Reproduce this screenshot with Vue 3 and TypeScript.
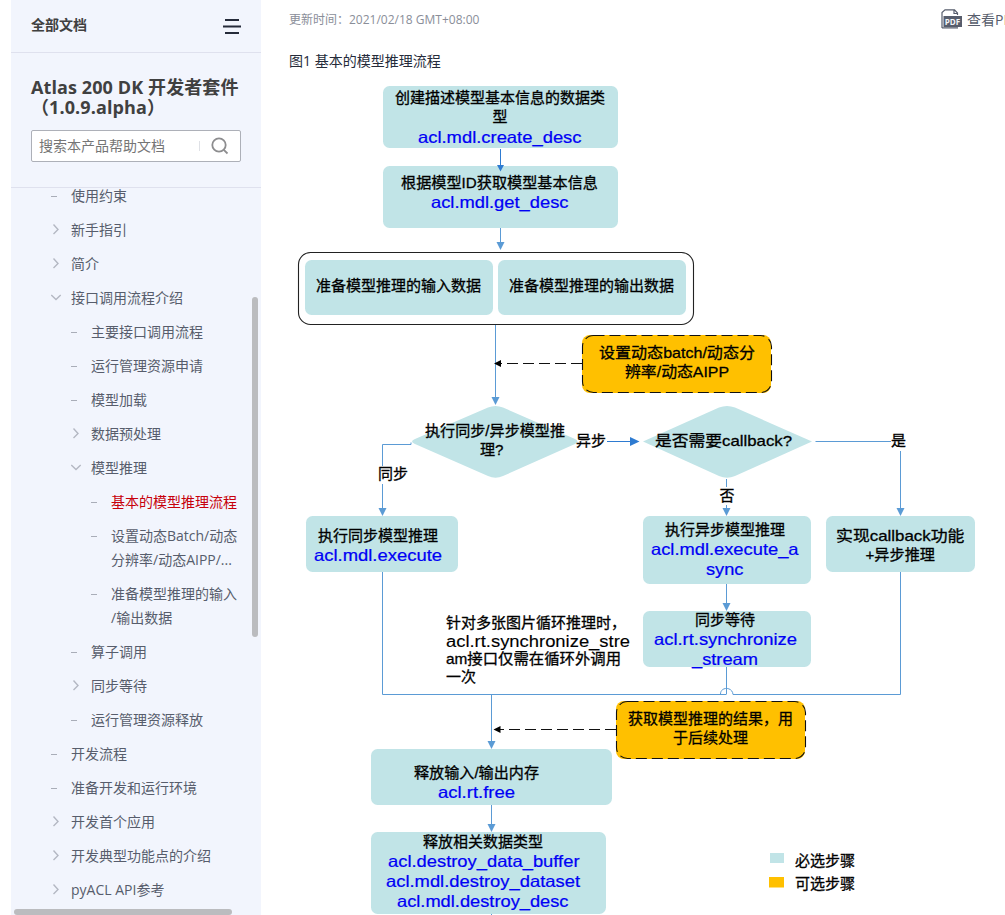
<script setup lang="ts">
type Kind = 'leaf' | 'closed' | 'open'
interface NavItem { lines: string[]; level: number; kind: Kind; active?: boolean }
interface Box { x: number; y: number; w: number; h: number }
interface Label { t: string; x: number; y: number; w: number; api?: boolean; plain?: boolean }

const nav: NavItem[] = [
  { lines: ['使用约束'], level: 0, kind: 'leaf' },
  { lines: ['新手指引'], level: 0, kind: 'closed' },
  { lines: ['简介'], level: 0, kind: 'closed' },
  { lines: ['接口调用流程介绍'], level: 0, kind: 'open' },
  { lines: ['主要接口调用流程'], level: 1, kind: 'leaf' },
  { lines: ['运行管理资源申请'], level: 1, kind: 'leaf' },
  { lines: ['模型加载'], level: 1, kind: 'leaf' },
  { lines: ['数据预处理'], level: 1, kind: 'closed' },
  { lines: ['模型推理'], level: 1, kind: 'open' },
  { lines: ['基本的模型推理流程'], level: 2, kind: 'leaf', active: true },
  { lines: ['设置动态Batch/动态', '分辨率/动态AIPP/...'], level: 2, kind: 'leaf' },
  { lines: ['准备模型推理的输入', '/输出数据'], level: 2, kind: 'leaf' },
  { lines: ['算子调用'], level: 1, kind: 'leaf' },
  { lines: ['同步等待'], level: 1, kind: 'closed' },
  { lines: ['运行管理资源释放'], level: 1, kind: 'leaf' },
  { lines: ['开发流程'], level: 0, kind: 'leaf' },
  { lines: ['准备开发和运行环境'], level: 0, kind: 'leaf' },
  { lines: ['开发首个应用'], level: 0, kind: 'closed' },
  { lines: ['开发典型功能点的介绍'], level: 0, kind: 'closed' },
  { lines: ['pyACL API参考'], level: 0, kind: 'closed' },
]

const required: Box[] = [
  { x: 383, y: 86, w: 235, h: 62 },
  { x: 383, y: 166, w: 235, h: 62 },
  { x: 305, y: 260, w: 188, h: 55 },
  { x: 498, y: 260, w: 188, h: 55 },
  { x: 306, y: 516, w: 152, h: 56 },
  { x: 643, y: 516, w: 168, h: 68 },
  { x: 826, y: 516, w: 149, h: 56 },
  { x: 643, y: 611, w: 168, h: 56 },
  { x: 371, y: 749, w: 241, h: 56 },
  { x: 371, y: 832, w: 235, h: 82 },
]
const optional: Box[] = [
  { x: 582, y: 335, w: 190, h: 58 },
  { x: 616, y: 701, w: 190, h: 58 },
]

const labels: Label[] = [
  { t: '创建描述模型基本信息的数据类', x: 395, y: 103, w: 210 },
  { t: '型', x: 492.5, y: 121.6, w: 15 },
  { t: 'acl.mdl.create_desc', x: 418, y: 142.7, w: 163.5, api: true },
  { t: '根据模型ID获取模型基本信息', x: 401, y: 188, w: 197 },
  { t: 'acl.mdl.get_desc', x: 431, y: 207.7, w: 137.5, api: true },
  { t: '准备模型推理的输入数据', x: 316, y: 291, w: 165 },
  { t: '准备模型推理的输出数据', x: 509, y: 291, w: 165 },
  { t: '设置动态batch/动态分', x: 599, y: 358, w: 156 },
  { t: '辨率/动态AIPP', x: 625, y: 377, w: 104 },
  { t: '执行同步/异步模型推', x: 425, y: 436, w: 140 },
  { t: '理?', x: 480, y: 455, w: 23.5 },
  { t: '异步', x: 576, y: 446, w: 30 },
  { t: '是否需要callback?', x: 655, y: 446, w: 137 },
  { t: '同步', x: 378, y: 479, w: 30 },
  { t: '否', x: 719.5, y: 501, w: 15 },
  { t: '是', x: 891, y: 446, w: 15 },
  { t: '执行异步模型推理', x: 665, y: 535, w: 120 },
  { t: 'acl.mdl.execute_a', x: 651, y: 554.7, w: 147.5, api: true },
  { t: 'sync', x: 706, y: 575, w: 37.5, api: true },
  { t: '实现callback功能', x: 836, y: 541, w: 128.5 },
  { t: '+异步推理', x: 865.5, y: 560, w: 69.5 },
  { t: '执行同步模型推理', x: 318, y: 541, w: 120 },
  { t: 'acl.mdl.execute', x: 314, y: 560.7, w: 128, api: true },
  { t: '针对多张图片循环推理时，', x: 446, y: 628, w: 180 },
  { t: 'acl.rt.synchronize_stre', x: 446, y: 646.7, w: 184, plain: true },
  { t: 'am接口仅需在循环外调用', x: 446, y: 664, w: 175 },
  { t: '一次', x: 446, y: 682, w: 30 },
  { t: '同步等待', x: 695, y: 625, w: 60 },
  { t: 'acl.rt.synchronize', x: 654, y: 645, w: 143, api: true },
  { t: '_stream', x: 692, y: 664.5, w: 66, api: true },
  { t: '获取模型推理的结果，用', x: 628, y: 724, w: 165 },
  { t: '于后续处理', x: 673, y: 743, w: 75 },
  { t: '释放输入/输出内存', x: 414, y: 778, w: 125 },
  { t: 'acl.rt.free', x: 438, y: 797.5, w: 77, api: true },
  { t: '释放相关数据类型', x: 423, y: 847, w: 120 },
  { t: 'acl.destroy_data_buffer', x: 388, y: 866.7, w: 191.5, api: true },
  { t: 'acl.mdl.destroy_dataset', x: 386, y: 887, w: 194, api: true },
  { t: 'acl.mdl.destroy_desc', x: 397, y: 907, w: 171.5, api: true },
  { t: '必选步骤', x: 795, y: 866, w: 60 },
  { t: '可选步骤', x: 795, y: 889, w: 60 },
]

const lines: string[] = [
  'M500.5 228V243', 'M495.5 325V398', 'M411 442.5V444.5H382.5V466M382.5 484V509',
  'M726.5 479V487M726.5 505V509', 'M815.5 441.5H891M900.5 451V509',
  'M726.5 584V604', 'M726.5 667V694', 'M382.5 572V694.5H726.5M733 694.5H900.5V572',
  'M720.5 694C720.5 686.5 732.5 686.5 733 694.5', 'M491.5 695V742', 'M491.5 805V825', 'M491.5 914V915',
]
const heads: [number, number][] = [
  [500.5, 250], [495.5, 405], [382.5, 516], [726.5, 516], [900.5, 516], [726.5, 611], [491.5, 749], [491.5, 832],
]
const head = ([x, y]: [number, number]): string => `M${x - 4} ${y - 8}H${x + 4}L${x} ${y}Z`
const kindOf = (l: Label): string => (l.api ? 'api' : l.plain ? 'plain' : 'step')
</script>

<template>
  <div class="page">
    <aside class="sidebar">
      <header class="all-docs">
        <span>全部文档</span>
        <svg width="18" height="15" viewBox="0 0 18 15"><path d="M2 1H16M0 7.5H18M2 14H16" stroke="#252b3a" stroke-width="2" /></svg>
      </header>
      <section class="product">
        <h1><span>Atlas 200 DK 开发者套件</span><span>（1.0.9.alpha）</span></h1>
        <div class="search">
          <span>搜索本产品帮助文档</span>
          <i></i>
          <svg width="18" height="18" viewBox="0 0 18 18" fill="none" stroke="#8d8d8f" stroke-width="1.8"><circle cx="8" cy="8" r="6.7" /><path d="M12.8 12.8L16.5 16.5" /></svg>
        </div>
      </section>
      <nav class="tree">
        <ul>
          <li v-for="(n, i) in nav" :key="i" :class="['lv' + n.level, { active: n.active }]">
            <svg class="mark" width="12" height="24" viewBox="0 0 12 24" fill="none">
              <path v-if="n.kind === 'leaf'" d="M0 12.5H6" stroke="#a9adb8" />
              <path v-else-if="n.kind === 'closed'" d="M2.5 6.5L7 11.5L2.5 16" stroke="#b4b8c3" stroke-width="1.4" />
              <path v-else d="M0.3 9L5 13.5L9.7 9" stroke="#b4b8c3" stroke-width="1.4" />
            </svg>
            <span class="name"><span v-for="l in n.lines" :key="l">{{ l }}</span></span>
          </li>
        </ul>
        <div class="bar-v"></div>
        <div class="bar-h"></div>
      </nav>
    </aside>

    <main class="content">
      <div class="meta">
        <span class="time">更新时间：2021/02/18 GMT+08:00</span>
        <span class="pdf">
          <svg width="22" height="20" viewBox="0 0 22 20">
            <path d="M1 19V3.5L4 0.8H13.5L16.5 4V6M13 1V4.5H16.5M1 18.8H17" fill="none" stroke="#575d6c" stroke-width="1.2" />
            <rect x="2.5" y="7" width="18.5" height="11" fill="#575d6c" />
            <text x="3.8" y="16" font-size="9" font-weight="700" textLength="15.5" lengthAdjust="spacingAndGlyphs" fill="#f4f5f8">PDF</text>
          </svg>
          <span>查看PDF</span>
        </span>
      </div>
      <p class="caption">图1 基本的模型推理流程</p>
      <svg class="flow" width="744" height="841" viewBox="261 74 744 841">
        <rect v-for="(b, i) in required" :key="'r' + i" :x="b.x" :y="b.y" :width="b.w" :height="b.h" rx="6.5" fill="#c1e4e7" />
        <rect x="298.5" y="252.5" width="395" height="72" rx="12" fill="none" stroke="#222" stroke-width="1.1" />
        <path d="M415 439L488 407.5Q495.5 404.5 503 407.5L575 439Q580 441.5 575 444L503 476Q495.5 479.5 488 476L415 444Q409 441.5 415 439Z" fill="#c1e4e7" />
        <path d="M643 441.5L719 407.5Q727 404.5 735 407.5L812 441.5L735 476Q727 479.5 719 476Z" fill="#c1e4e7" />
        <g v-for="(b, i) in optional" :key="'o' + i">
          <rect :x="b.x" :y="b.y" :width="b.w - 1" :height="b.h" rx="8" fill="#ffc000" />
          <rect :x="b.x + 0.5" :y="b.y + 0.5" :width="b.w - 1" :height="b.h - 1" rx="11" fill="none" stroke="#111" stroke-width="1.1" stroke-dasharray="11 5" />
        </g>
        <path v-for="l in lines" :key="l" :d="l" fill="none" stroke="#5b9bd5" />
        <path v-for="(h, i) in heads" :key="'h' + i" :d="head(h)" fill="#5b9bd5" />
        <path d="M500.5 149V165M607 441.5H631" stroke="#2e7bd1" />
        <path d="M497 165H504L500.5 171.5ZM630 437V446L639.5 441.5Z" fill="#2e7bd1" />
        <path d="M582 363.5H500M616 729.5H499" stroke="#111" stroke-width="1.1" stroke-dasharray="11 5" />
        <path d="M494 363.5L501 360V367ZM493.5 729.5L500.5 726V733Z" fill="#000" />
        <rect x="770" y="853" width="14" height="10" fill="#c1e4e7" />
        <rect x="769" y="877" width="15" height="10.5" fill="#ffc000" />
        <text v-for="(l, i) in labels" :key="'t' + i" :x="l.x" :y="l.y" :textLength="l.w" lengthAdjust="spacingAndGlyphs" :class="kindOf(l)">{{ l.t }}</text>
      </svg>
    </main>
  </div>
</template>

<style>
body { margin: 0; overflow: hidden; background: #fff; }
</style>

<style scoped>
.page { display: flex; width: 1005px; height: 915px; overflow: hidden; padding-left: 11px; box-sizing: border-box; font-family: "Open Sans", "Noto Sans CJK SC", sans-serif; }
.sidebar { flex: 0 0 250px; background: #f2f5fd; display: flex; flex-direction: column; }
.all-docs { height: 52px; border-bottom: 1px solid #dfe1ee; display: flex; align-items: center; justify-content: space-between; padding: 0 20px; font-size: 14px; font-weight: 700; color: #404040; flex: none; }
.all-docs span { padding-bottom: 5px; }
.product { height: 110px; border-bottom: 1px solid #dfe1ee; padding: 24px 20px 0; flex: none; }
h1 { margin: 0; font-size: 18px; line-height: 20px; height: 40px; font-weight: 700; color: #404040; white-space: nowrap; }
h1 span { display: block; letter-spacing: 0.1px; }
.search { margin-top: 13px; width: 210px; height: 32px; box-sizing: border-box; border: 1px solid #adb0b8; border-radius: 2px; background: #fff; display: flex; align-items: center; padding: 0 11px 0 7px; font-size: 14px; color: #757575; }
.search span { padding-bottom: 3px; }
.search i { width: 1px; height: 10px; background: #dfe1e6; margin-left: auto; margin-right: 11px; }
.tree { position: relative; flex: 1; min-height: 0; overflow: hidden; }
ul { list-style: none; margin: -9px 0 0; padding: 0; }
li { display: flex; padding: 5px 0 5px 40px; font-size: 14px; line-height: 24px; color: #575d6c; }
.lv1 { padding-left: 60px; }
.lv2 { padding-left: 80px; }
.active { color: #c7000b; }
.mark { flex: none; margin-right: 8px; }
.name > span { display: block; height: 24px; white-space: nowrap; }
.bar-v { position: absolute; left: 241px; top: 109px; width: 6px; height: 340px; border-radius: 3px; background: #bbbcbf; }
.bar-h { position: absolute; left: 3px; bottom: 0; width: 218px; height: 6px; border-radius: 3px; background: #bbbcbf; }
.content { flex: 0 0 733px; width: 733px; }
.meta { height: 40px; display: flex; justify-content: space-between; padding-left: 28px; color: #8a8e99; font-size: 12px; line-height: 40px; white-space: nowrap; }
.pdf { flex: none; width: 53px; display: flex; align-items: center; gap: 4px; font-size: 14px; color: #575d6c; line-height: 38px; }
.pdf svg { flex: none; margin-top: -2px; }
.caption { margin: 0; height: 34px; padding: 9px 0 0 28px; box-sizing: border-box; font-size: 14px; line-height: 24px; color: #252b3a; }
.flow { display: block; }
.step { font-family: "Liberation Sans", "Noto Sans CJK SC", sans-serif; font-size: 15px; fill: #000; stroke: #000; stroke-width: 0.3px; }
.plain { font-family: "Liberation Sans", sans-serif; font-size: 16px; fill: #000; stroke: #000; stroke-width: 0.12px; }
.api { font-family: "Liberation Sans", sans-serif; font-size: 16.5px; fill: #0000f5; stroke: #0000f5; stroke-width: 0.22px; }
</style>
